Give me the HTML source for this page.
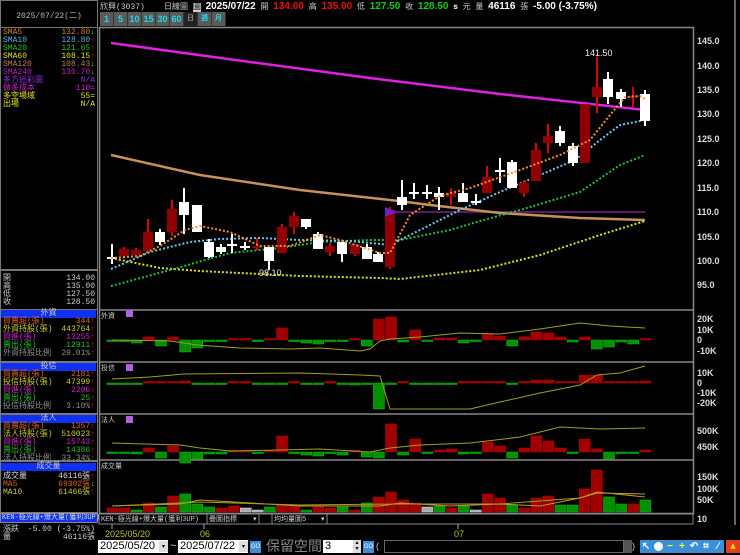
<!DOCTYPE html>
<html><head><meta charset="utf-8">
<style>
*{margin:0;padding:0;box-sizing:border-box}
body{width:740px;height:553px;background:#000;overflow:hidden;position:relative;font-family:"Liberation Mono","Noto Sans CJK TC",monospace;font-size:8px;color:#ccc}
.a{position:absolute;white-space:nowrap}
.row{position:absolute;left:3px;width:92px;height:8px;line-height:8px;font-size:8px}
.row .v{position:absolute;right:0}
.hb{position:absolute;left:1px;width:95px;height:8px;background:#1030f0;color:#ccc;text-align:center;line-height:8px;font-size:8px}
.box{position:absolute;border:1px solid #777}
.btn{position:absolute;top:12px;height:14px;width:14px;background:#5a5a5a;color:#20d8e8;font:bold 9px "Liberation Sans",sans-serif;text-align:center;line-height:14px;border-right:1px solid #333}
.up{color:#f00}.dn{color:#0f0}
.ic{position:absolute;top:540px;width:12px;height:13px;background:#3a8fd8;color:#fff;font:bold 10px "Liberation Sans",sans-serif;text-align:center;line-height:13px}
</style></head><body>

<!-- left panel -->
<div class="box" style="left:0;top:0;width:98px;height:28px;"></div>
<div class="a" style="left:0;top:10px;width:98px;text-align:center;font-size:8px;color:#bbb">2025/07/22(二)</div>
<div class="box" style="left:0;top:27px;width:98px;height:243px"></div>
<div class="row" style="top:29px;color:#d08020">SMA5<span class="v">132.80<span class="dn">↓</span></span></div>
<div class="row" style="top:37px;color:#60b0e0">SMA10<span class="v">128.80<span class="up">↑</span></span></div>
<div class="row" style="top:45px;color:#20c020">SMA20<span class="v">121.65<span class="up">↑</span></span></div>
<div class="row" style="top:53px;color:#e0e020">SMA60<span class="v">108.15<span class="up">↑</span></span></div>
<div class="row" style="top:61px;color:#c08050">SMA120<span class="v">108.43<span class="dn">↓</span></span></div>
<div class="row" style="top:69px;color:#c020c0">SMA240<span class="v">130.70<span class="dn">↓</span></span></div>
<div class="row" style="top:77px;color:#9030e0">多方迷彩圖<span class="v">N/A</span></div>
<div class="row" style="top:85px;color:#d020d0">做多成本<span class="v">110=</span></div>
<div class="row" style="top:93px;color:#e0e020">多空場域<span class="v">55=</span></div>
<div class="row" style="top:101px;color:#e0e020">出場<span class="v">N/A</span></div>

<div class="box" style="left:0;top:270px;width:98px;height:40px"></div>
<div class="row" style="top:275px;color:#ccc">開<span class="v">134.00</span></div>
<div class="row" style="top:283px;color:#ccc">高<span class="v">135.00</span></div>
<div class="row" style="top:291px;color:#ccc">低<span class="v">127.50</span></div>
<div class="row" style="top:299px;color:#ccc">收<span class="v">128.50</span></div>

<div class="box" style="left:0;top:309px;width:98px;height:53px"></div>
<div class="hb" style="top:310px">外資</div>
<div class="row" style="top:318px;color:#e06020">買賣超(張)<span class="v">344<span class="up">↑</span></span></div>
<div class="row" style="top:326px;color:#d0d020">外資持股(張)<span class="v">443764<span class="up">↑</span></span></div>
<div class="row" style="top:334px;color:#d020d0">買進(張)<span class="v">13255<span class="up">↑</span></span></div>
<div class="row" style="top:342px;color:#20c020">賣出(張)<span class="v">12911<span class="up">↑</span></span></div>
<div class="row" style="top:350px;color:#909090">外資持股比例<span class="v">29.01%<span class="up">↑</span></span></div>

<div class="box" style="left:0;top:362px;width:98px;height:52px"></div>
<div class="hb" style="top:363px">投信</div>
<div class="row" style="top:371px;color:#e06020">買賣超(張)<span class="v">2181<span class="up">↑</span></span></div>
<div class="row" style="top:379px;color:#d0d020">投信持股(張)<span class="v">47399<span class="up">↑</span></span></div>
<div class="row" style="top:387px;color:#d020d0">買進(張)<span class="v">2206<span class="up">↑</span></span></div>
<div class="row" style="top:395px;color:#20c020">賣出(張)<span class="v">25<span class="up">↑</span></span></div>
<div class="row" style="top:403px;color:#909090">投信持股比例<span class="v">3.10%<span class="up">↑</span></span></div>

<div class="box" style="left:0;top:414px;width:98px;height:47px"></div>
<div class="hb" style="top:415px">法人</div>
<div class="row" style="top:423px;color:#e06020">買賣超(張)<span class="v">1357<span class="up">↑</span></span></div>
<div class="row" style="top:431px;color:#d0d020">法人持股(張)<span class="v">510023<span class="up">↑</span></span></div>
<div class="row" style="top:439px;color:#d020d0">買進(張)<span class="v">15743<span class="up">↑</span></span></div>
<div class="row" style="top:447px;color:#20c020">賣出(張)<span class="v">14386<span class="up">↑</span></span></div>
<div class="row" style="top:455px;color:#909090">法人持股比例<span class="v">33.34%<span class="up">↑</span></span></div>

<div class="box" style="left:0;top:461px;width:98px;height:52px"></div>
<div class="hb" style="top:463px">成交量</div>
<div class="row" style="top:473px;color:#ddd">成交量<span class="v">46116張<span class="up">↑</span></span></div>
<div class="row" style="top:481px;color:#e06020">MA5<span class="v">69302張<span class="dn">↓</span></span></div>
<div class="row" style="top:489px;color:#d0d020">MA10<span class="v">61466張<span class="up">↑</span></span></div>

<div class="a" style="left:0;top:513px;width:98px;height:10px;background:#1030f0;border:1px solid #888;color:#ddd;font-size:7px;line-height:8px;padding-left:1px">KEN-極光線+爆大量(獲利3UP)</div>
<div class="row" style="top:526px;color:#ccc">漲跌<span class="v">-5.00 (-3.75%)</span></div>
<div class="row" style="top:534px;color:#ccc">量<span class="v">46116張</span></div>

<!-- top header -->
<div class="a" style="left:100px;top:1px;font-size:8px;color:#ccc;line-height:10px">欣興(3037)&nbsp;&nbsp;&nbsp; 日線圖 <span style="background:#ccc;color:#000">圖</span> <b style="color:#fff;font:bold 10px 'Liberation Sans',sans-serif">2025/07/22</b> 開 <b style="color:#f01010;font:bold 10px 'Liberation Sans',sans-serif">134.00</b> 高 <b style="color:#f01010;font:bold 10px 'Liberation Sans',sans-serif">135.00</b> 低 <b style="color:#10d010;font:bold 10px 'Liberation Sans',sans-serif">127.50</b> 收 <b style="color:#10d010;font:bold 10px 'Liberation Sans',sans-serif">128.50</b> <b style="color:#fff;font:bold 8px 'Liberation Sans'">s</b> 元 量 <b style="color:#fff;font:bold 10px 'Liberation Sans',sans-serif">46116</b> 張 <b style="color:#fff;font:bold 10px 'Liberation Sans',sans-serif">-5.00 (-3.75%)</b></div>
<div class="btn" style="left:100px">1</div>
<div class="btn" style="left:114px">5</div>
<div class="btn" style="left:128px">10</div>
<div class="btn" style="left:142px">15</div>
<div class="btn" style="left:156px">30</div>
<div class="btn" style="left:170px">60</div>
<div class="btn" style="left:184px;background:#222;color:#888;font-size:7px">日</div>
<div class="btn" style="left:198px;font-size:7px">週</div>
<div class="btn" style="left:212px;font-size:7px">月</div>

<svg class="a" style="left:0;top:0" width="740" height="553" id="sv">
<g fill="none" stroke="#888" stroke-width="1.5">
<rect x="99.5" y="27.5" width="594" height="486"/>
<line x1="99" y1="310" x2="693" y2="310"/>
<line x1="99" y1="362" x2="693" y2="362"/>
<line x1="99" y1="414" x2="693" y2="414"/>
<line x1="99" y1="460" x2="693" y2="460"/>
<line x1="735" y1="0" x2="735" y2="525"/>
</g>
<g fill="#ddd" font-family="Liberation Sans,sans-serif" font-size="9" font-weight="bold">
<text x="697" y="44">145.0</text><text x="697" y="69">140.0</text><text x="697" y="93">135.0</text><text x="697" y="117">130.0</text><text x="697" y="142">125.0</text><text x="697" y="166">120.0</text><text x="697" y="191">115.0</text><text x="697" y="215">110.0</text><text x="697" y="240">105.0</text><text x="697" y="264">100.0</text><text x="697" y="288">95.0</text>
<text x="697" y="322">20K</text><text x="697" y="333">10K</text><text x="697" y="343">0</text><text x="697" y="354">-10K</text>
<text x="697" y="376">10K</text><text x="697" y="386">0</text><text x="697" y="396">-10K</text><text x="697" y="406">-20K</text>
<text x="697" y="434">500K</text><text x="697" y="450">450K</text>
<text x="697" y="480">150K</text><text x="697" y="492">100K</text><text x="697" y="503">50K</text><text x="697" y="522">10</text>
<text x="585" y="56" font-weight="normal" fill="#eee">141.50</text>
<text x="259" y="276" font-weight="normal" fill="#eee">98.10</text>
</g>
<g fill="#ccc" font-size="7" font-family="Liberation Mono,Noto Sans CJK TC,monospace">
<text x="101" y="318">外資</text><text x="101" y="370">投信</text><text x="101" y="422">法人</text><text x="101" y="468">成交量</text>
</g>
<rect x="126" y="310" width="7" height="7" fill="#b060e0"/><rect x="126" y="364" width="7" height="7" fill="#b060e0"/><rect x="126" y="416" width="7" height="7" fill="#b060e0"/>
<line x1="390" y1="212" x2="645" y2="212" stroke="#5a1a6a" stroke-width="2"/>
<polyline fill="none" stroke="#c8905a" stroke-width="2.5" points="111,155 200,175 300,190 399,201 430,205 500,213 580,218 645,220"/>
<polyline fill="none" stroke="#e020e0" stroke-width="2.5" points="111,43 250,62 370,78 500,94 645,110"/>
<g fill="none" stroke-width="2" stroke-dasharray="2,2">
<polyline stroke="#e0e020" points="111,258 160,268 200,271 260,274 300,276 380,278 400,279 480,270 540,255 600,235 645,221"/>
<polyline stroke="#20c040" points="111,286 170,270 230,253 280,248 320,242 370,240 400,240 450,230 480,221 520,210 580,192 620,165 645,155"/>
<polyline stroke="#70c8f0" points="111,269 150,252 190,242 220,239 260,238 300,240 350,241 390,245 410,235 460,210 500,192 540,175 575,160 600,140 620,125 645,120"/>
</g>
<g id="cd"></g>
<g fill="none" stroke-width="2" stroke-dasharray="2,2">
<polyline stroke="#f09030" points="111,258 140,256 160,246 185,230 200,226 230,232 260,246 290,246 320,235 340,240 380,253 390,253 410,215 440,196 470,188 520,170 560,155 590,140 610,115 625,97 640,96 645,99"/>
</g>
<polygon points="385,207 397,212 385,217" fill="#7020c0"/>
<g id="sub"></g>
<g fill="none" stroke-width="1">
<polyline stroke="#a0a020" points="112,340 170,341 184,343 197,345 240,348 290,349 320,348 360,351 370,349 380,341 390,339 420,337 460,333 500,334 540,329 580,323 610,326 645,328"/>
<polyline stroke="#a0a020" points="112,379 150,377 184,374 300,373 360,375 380,376 390,409 470,409 500,402 540,393 580,385 597,375 620,373 645,366"/>
<polyline stroke="#a0a020" points="112,443 180,445 200,448 230,451 280,450 320,449 370,452 390,448 420,445 470,443 520,437 560,427 600,429 645,428"/>
<polyline stroke="#d09030" points="112,506 180,504 200,500 250,503 300,506 380,506 400,503 450,506 500,504 540,506 580,498 597,493 645,494"/>
<polyline stroke="#a0a020" points="112,506 200,502 300,505 400,504 500,504 580,498 597,492 645,497"/>
</g>
<!-- bottom -->
<rect x="99" y="514" width="594" height="10" fill="#000" stroke="#888"/>
<g font-size="7" fill="#ccc" font-family="Liberation Mono,Noto Sans CJK TC,monospace">
<text x="101" y="521">KEN-極光線+爆大量(獲利3UP)</text>
<rect x="207" y="514" width="52" height="10" fill="#000" stroke="#888"/><text x="209" y="521">疊圖指標</text><text x="253" y="521">▾</text>
<rect x="272" y="514" width="55" height="10" fill="#000" stroke="#888"/><text x="274" y="521">均均量圖5</text><text x="321" y="521">▾</text>
</g>
<g stroke="#aaa"><line x1="112" y1="524" x2="112" y2="529"/><line x1="204" y1="524" x2="204" y2="529"/><line x1="458" y1="524" x2="458" y2="529"/></g>
<g fill="#c0c020" font-family="Liberation Sans,sans-serif" font-size="9">
<text x="105" y="537">2025/05/20</text><text x="200" y="537">06</text><text x="454" y="537">07</text>
</g>
</svg>

<!-- controls -->
<div class="a" style="left:98px;top:540px;width:70px;height:13px;background:#fff;color:#000;font:11px 'Liberation Sans',sans-serif;line-height:13px;padding-left:2px">2025/05/20<span style="position:absolute;right:0;top:1px;width:9px;height:11px;background:#ddd;font-size:6px;text-align:center">▾</span></div>
<div class="a" style="left:170px;top:540px;color:#ccc;font:11px 'Liberation Sans';line-height:13px">~</div>
<div class="a" style="left:178px;top:540px;width:70px;height:13px;background:#fff;color:#000;font:11px 'Liberation Sans',sans-serif;line-height:13px;padding-left:2px">2025/07/22<span style="position:absolute;right:0;top:1px;width:9px;height:11px;background:#ddd;font-size:6px;text-align:center">▾</span></div>
<div class="a" style="left:250px;top:541px;width:11px;height:12px;background:#3a8fd8;color:#fff;font:6px 'Liberation Sans';line-height:12px;text-align:center">GO</div>
<div class="a" style="left:266px;top:538px;color:#888;font:14px 'Liberation Sans','Noto Sans CJK TC',sans-serif;line-height:16px">保留空間</div>
<div class="a" style="left:323px;top:540px;width:30px;height:13px;background:#fff;color:#000;font:11px 'Liberation Sans';line-height:13px;padding-left:2px">3</div>
<div class="a" style="left:353px;top:540px;width:8px;height:13px;background:#ddd;color:#000;font-size:6px;line-height:6px;text-align:center">▴<br>▾</div>
<div class="a" style="left:363px;top:541px;width:11px;height:12px;background:#3a8fd8;color:#fff;font:6px 'Liberation Sans';line-height:12px;text-align:center">GO</div>
<div class="a" style="left:376px;top:540px;width:8px;height:13px;color:#ccc;font:9px 'Liberation Sans';line-height:13px">(</div>
<div class="a" style="left:384px;top:540px;width:240px;height:13px;background:#000;border:1px solid #666"></div>
<div class="a" style="left:624px;top:540px;width:8px;height:13px;background:#555"></div>
<div class="a" style="left:632px;top:540px;color:#ccc;font:9px 'Liberation Sans';line-height:13px">)</div>
<div class="ic" style="left:640px">↖</div>
<div class="ic" style="left:652px"><span style="display:inline-block;width:9px;height:9px;border-radius:50%;background:#fff;margin-top:2px"></span></div>
<div class="ic" style="left:664px;color:#ff0">−</div>
<div class="ic" style="left:676px;color:#ff0">+</div>
<div class="ic" style="left:688px">↶</div>
<div class="ic" style="left:700px">⌗</div>
<div class="ic" style="left:712px">⁄</div>
<div class="ic" style="left:726px;width:14px;background:#e04020;color:#fc0">▲</div>

<script>
var NS="http://www.w3.org/2000/svg";
function el(p,t,a){var e=document.createElementNS(NS,t);for(var k in a)e.setAttribute(k,a[k]);p.appendChild(e);return e;}
var C=[[112,244,257,259,264,'w'],[124,247,249,256,258,'r'],[136,248,250,255,257,'r'],[148,219,232,251,251,'r'],[160,229,232,242,245,'w'],[172,200,209,232,236,'r'],[184,188,202,215,234,'w'],[197,205,205,232,232,'w'],[209,239,242,257,258,'w'],[221,244,247,252,254,'w'],[232,234,244,246,253,'w'],[245,242,246,248,250,'w'],[257,238,246,248,250,'r'],[269,247,247,261,270,'w'],[282,224,227,253,253,'r'],[294,212,216,227,234,'r'],[306,219,219,227,229,'w'],[318,232,234,249,249,'w'],[330,243,246,252,256,'r'],[342,242,242,254,262,'w'],[355,244,244,254,256,'r'],[367,244,247,259,259,'w'],[378,252,254,262,262,'w'],[390,207,210,267,269,'r'],[402,180,197,205,210,'w'],[414,183,192,194,199,'w'],[427,185,192,194,199,'w'],[439,187,193,197,210,'w'],[451,188,193,197,205,'r'],[463,183,193,202,202,'w'],[476,194,201,203,205,'w'],[487,166,177,193,193,'r'],[500,158,170,172,183,'w'],[512,160,162,188,188,'w'],[524,180,183,193,197,'r'],[536,143,150,181,181,'r'],[548,124,136,143,153,'r'],[560,126,131,143,146,'w'],[573,143,146,163,166,'w'],[585,104,104,163,163,'r'],[597,57,87,97,113,'r'],[608,72,79,97,104,'w'],[621,89,92,99,107,'w'],[633,87,96,98,107,'r'],[645,90,94,121,126,'w']];
var g=document.getElementById('cd');
C.forEach(function(c){var col=c[5]=='r'?'#e00000':'#fff';var fill=c[5]=='r'?'#900000':'#fff';
el(g,'line',{x1:c[0],x2:c[0],y1:c[1],y2:c[4],stroke:col,'stroke-width':2});
el(g,'rect',{x:c[0]-5,y:c[2],width:10,height:Math.max(2,c[3]-c[2]),fill:fill});});
var s=document.getElementById('sub');
function bars(z,d){d.forEach(function(v,i){var x=112+12.11*i-5;var h=Math.max(1.5,Math.abs(v));
if(v>0)el(s,'rect',{x:x,y:z-h,width:11,height:h,fill:'#a00000',stroke:'#c00000','stroke-width':.5});
else el(s,'rect',{x:x,y:z,width:11,height:h,fill:'#009000',stroke:'#10c010','stroke-width':.5});});}
bars(340,[0,0,-3,3,-6,3,-12,-8,-1,-1,1,1,-1,1,12,0,-3,-4,-1,-1,1,-6,21,23,-2,10,0,2,2,-3,-1,6,4,-6,3,8,7,3,-2,3,-9,-7,-2,-4,1]);
bars(383,[-1,-1,-1,1,1,1,2,-1,-1,-1,1,1,-1,-1,-1,1,-1,-1,1,-1,-2,-1,-26,-1,1,-1,-1,-1,-1,1,1,1,1,-1,1,3,3,1,1,8,8,1,1,1,2]);
bars(452,[0,0,-2,4,-6,6,-11,-7,-2,-2,1,1,-1,1,16,0,-3,-4,-1,-3,1,-5,-6,28,-3,13,0,2,3,-2,-1,10,6,-6,4,16,11,4,-1,13,3,-7,-1,-1,2]);
var vt=[508,508,510,503,507,496,494,504,507,508,506,508,510,507,505,505,510,507,508,507,510,503,497,492,500,503,507,506,508,506,510,494,498,505,508,498,496,505,505,489,470,497,504,504,500];
var vc="rrgrgrgggrrxxgrrgrrgrgrrrrxgrgxrrgrrrggrrggrg";
vt.forEach(function(t,i){var x=112+12.11*i-5;var k=vc[i];var f=k=='r'?'#a00000':k=='g'?'#009000':'#aaa';var st=k=='r'?'#c00000':k=='g'?'#10c010':'#ddd';
el(s,'rect',{x:x,y:t,width:11,height:512-t,fill:f,stroke:st,'stroke-width':.5});});
</script>
</body></html>
